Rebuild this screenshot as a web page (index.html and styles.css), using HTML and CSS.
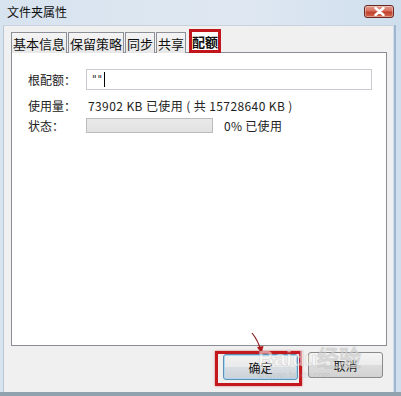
FILE: index.html
```html
<!DOCTYPE html>
<html lang="zh-CN">
<head>
<meta charset="utf-8">
<title>文件夹属性</title>
<link rel="stylesheet" href="styles.css">
</head>
<body>
<div class="window">
  <div class="titlebar">
    <span class="title">文件夹属性</span>
    <button class="close" aria-label="关闭">
      <svg width="11" height="9" viewBox="0 0 11 9"><path d="M1.5 1 L9.5 8 M9.5 1 L1.5 8" stroke="#fff" stroke-width="2.4" stroke-linecap="round"/></svg>
    </button>
  </div>
  <div class="client">
    <div class="tabs">
      <div class="tab">基本信息</div>
      <div class="tab">保留策略</div>
      <div class="tab">同步</div>
      <div class="tab">共享</div>
      <div class="tab active">配额</div>
    </div>
    <div class="panel">
      <div class="row row-input">
        <span class="label">根配额：</span>
        <div class="input"><span class="quote">""</span><span class="caret"></span></div>
      </div>
      <div class="row row-text">
        <span class="label">使用量：</span>
        <span class="value wide">73902 KB 已使用 ( 共 15728640 KB )</span>
      </div>
      <div class="row row-progress">
        <span class="label">状态：</span>
        <div class="progress"></div>
        <span class="value pct">0% 已使用</span>
      </div>
    </div>
    <div class="buttons">
      <div class="highlight"><button class="btn default">确定</button></div>
      <button class="btn">取消</button>
    </div>
    <svg class="arrow" width="20" height="24" viewBox="0 0 20 24">
      <path d="M2 1 C6 6 9 11 11 19" stroke="#8b1a1a" stroke-width="1.2" fill="none"/>
      <path d="M7 15 L11.5 22 L13.5 14 Z" fill="#b01818"/>
    </svg>
    <div class="watermark">
      <span class="wm-big">Bai<span class="wm-du">du</span>经验</span>
      <span class="wm-small">jingyan.baidu.com</span>
    </div>
  </div>
</div>
</body>
</html>
```
FILE: styles.css
```css
html, body {
  margin: 0;
  padding: 0;
}
body {
  width: 401px;
  height: 396px;
  overflow: hidden;
  font-family: "Noto Sans CJK SC", "Noto Sans", sans-serif;
  font-size: 12px;
  color: #1a1a1a;
}
.window {
  width: 401px;
  height: 396px;
  display: flex;
  flex-direction: column;
  background: linear-gradient(to right, #d7e3ef 0%, #dfe8f2 60%, #cfdeed 100%);
  position: relative;
}
.titlebar {
  height: 25px;
  display: flex;
  align-items: center;
  padding-left: 7px;
  padding-right: 7px;
  flex-shrink: 0;
}
.title {
  font-size: 12px;
  line-height: 14px;
  color: #101010;
  margin-top: -2px;
}
.close {
  margin-left: auto;
  width: 30px;
  height: 13px;
  margin-top: -3px;
  border: 1px solid #6a2a22;
  border-radius: 3px;
  background: linear-gradient(#e39c8f 0%, #d6705e 45%, #c0402c 55%, #d36a52 100%);
  padding: 0;
  display: flex;
  align-items: center;
  justify-content: center;
  box-shadow: inset 0 0 0 1px rgba(255,255,255,0.35);
}
.client {
  flex: 1;
  margin: 0 8px 4px 3px;
  background: #f0f0f0;
  border-left: 1px solid #b9c6d4;
  border-top: 1px solid #c8d3de;
  position: relative;
  display: flex;
  flex-direction: column;
}
.window::after {
  content: "";
  position: absolute;
  left: 0;
  right: 0;
  bottom: 0;
  height: 4px;
  background: #8fa2ae;
}
.window::before {
  content: "";
  position: absolute;
  right: 5px;
  top: 25px;
  bottom: 4px;
  width: 2px;
  background: #9fb6cf;
}
.tabs {
  display: flex;
  align-items: flex-end;
  margin: 2px 0 0 7px;
  height: 25px;
  position: relative;
  z-index: 1;
  margin-bottom: -1px;
}
.tab {
  height: 21px;
  box-sizing: border-box;
  border: 1px solid #8e9098;
  border-bottom: none;
  background: linear-gradient(#f4f4f4, #e8e8e8);
  padding: 0 1px;
  display: flex;
  align-items: center;
  font-size: 13px;
  margin-right: 1px;
  color: #111;
}
.tab.active {
  height: 24px;
  background: #fff;
  margin-left: 2px;
  border: 3px solid #c0161c;
  padding: 0;
  font-weight: bold;
}
.panel {
  margin: 0 6px 0 7px;
  height: 294px;
  box-sizing: border-box;
  border: 1px solid #8b8d94;
  background: #fff;
  padding: 16px 0 0 16px;
}
.row {
  display: flex;
  align-items: center;
}
.label {
  width: 58px;
  flex-shrink: 0;
  color: #222;
}
.row-input {
  height: 21px;
  margin-bottom: 6px;
}
.input {
  width: 286px;
  height: 21px;
  box-sizing: border-box;
  border: 1px solid #c8cbd0;
  display: flex;
  align-items: center;
  padding-left: 5px;
}
.quote {
  font-family: "DejaVu Sans", sans-serif;
  font-size: 10px;
  letter-spacing: 1px;
  color: #222;
}
.caret {
  width: 1px;
  height: 15px;
  background: #000;
  margin-left: 1px;
}
.row-text {
  height: 18px;
  margin-bottom: 4px;
}
.value {
  color: #222;
  margin-left: 2px;
}
.value.wide {
  letter-spacing: 0.4px;
}
.row-progress {
  height: 15px;
}
.progress {
  width: 127px;
  height: 15px;
  box-sizing: border-box;
  border: 1px solid #bcbcbc;
  background: linear-gradient(#e9e9e9, #e2e2e2);
}
.pct {
  margin-left: 11px;
  letter-spacing: 0.3px;
}
.buttons {
  display: flex;
  align-items: flex-start;
  padding-left: 211px;
  margin-top: 5px;
}
.highlight {
  width: 87px;
  height: 35px;
  box-sizing: border-box;
  border: 3px solid #c4181e;
  box-shadow: 0 0 2px rgba(200,30,30,0.6);
  padding: 0 0 0 5px;
  display: flex;
  align-items: flex-start;
}
.btn {
  width: 75px;
  height: 26px;
  box-sizing: border-box;
  border: 1px solid #8a8a8a;
  border-radius: 3px;
  background: linear-gradient(#f4f4f4 0%, #ececec 48%, #dcdcdc 52%, #d2d2d2 100%);
  font-family: "Noto Sans CJK SC", sans-serif;
  font-size: 12px;
  color: #111;
  padding: 0;
  margin-top: 1px;
}
.btn.default {
  border-color: #5f8fb5;
  background: linear-gradient(#f2f2f2 0%, #eaeaea 48%, #d8dde1 52%, #cbd3d9 100%);
  box-shadow: inset 0 0 0 1px #a9d8f0;
  margin-top: 0;
}
.highlight + .btn {
  margin-left: 6px;
}
.arrow {
  position: absolute;
  left: 246px;
  top: 306px;
}
.watermark {
  position: absolute;
  left: 254px;
  top: 320px;
  display: flex;
  flex-direction: column;
  pointer-events: none;
}
.wm-big {
  font-family: "Liberation Sans", sans-serif;
  font-size: 22px;
  font-weight: bold;
  color: rgba(255,255,255,0.55);
  -webkit-text-stroke: 0.6px rgba(150,150,150,0.35);
  line-height: 26px;
}
.wm-du {
  font-size: 20px;
}
.wm-small {
  font-family: "Liberation Sans", sans-serif;
  font-size: 9px;
  color: rgba(170,170,170,0.35);
  margin-top: -2px;
}
```
